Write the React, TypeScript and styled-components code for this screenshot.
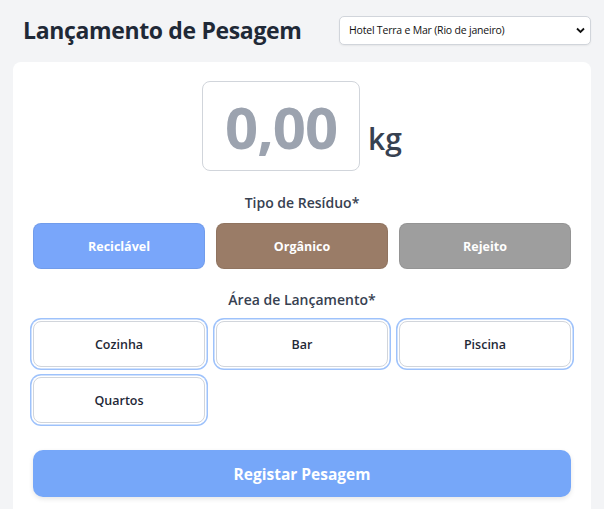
import React, { useState } from "react";
import styled, { createGlobalStyle } from "styled-components";

const Global = createGlobalStyle`
  html, body { margin: 0; padding: 0; background: #f3f4f6; }
  body { font-family: "Open Sans", "Noto Sans", sans-serif; color: #1f2937; }
  * { box-sizing: border-box; }
`;

const Page = styled.div`
  padding: 0 13px;
  min-height: 509px;
`;

const Header = styled.header`
  display: flex;
  align-items: center;
  justify-content: space-between;
  padding: 14px 0 16px 10px;
`;

const Title = styled.h1`
  margin: 0;
  font-size: 23px;
  font-weight: 700;
  color: #1f2937;
  letter-spacing: -0.35px;
`;

const SelectWrap = styled.div`
  position: relative;
  width: 252px;
  height: 29px;
`;

const Select = styled.select`
  appearance: none;
  width: 100%;
  height: 100%;
  border: 1px solid #d1d5db;
  border-radius: 5px;
  background: #fff;
  box-shadow: 0 1px 2px rgba(0, 0, 0, 0.06);
  padding: 0 24px 0 9px;
  font-family: "Open Sans", sans-serif;
  font-size: 10.5px;
  letter-spacing: -0.2px;
  color: #111;
`;

const Chevron = styled.svg`
  position: absolute;
  right: 6px;
  top: 11px;
  pointer-events: none;
`;

const Card = styled.main`
  background: #fff;
  border-radius: 8px;
  padding: 19px 20px 24px;
  display: flex;
  flex-direction: column;
  align-items: stretch;
`;

const WeightRow = styled.div`
  display: flex;
  justify-content: center;
  align-items: flex-end;
  gap: 8px;
`;

const WeightBox = styled.div`
  width: 158px;
  height: 90px;
  border: 1px solid #d1d5db;
  border-radius: 8px;
  display: flex;
  align-items: center;
  justify-content: center;
  font-size: 58px;
  font-weight: 700;
  color: #9ca3af;
  letter-spacing: -1px;
`;

const Unit = styled.span`
  font-size: 30px;
  font-weight: 600;
  color: #374151;
  line-height: 1;
  padding-bottom: 17px;
`;

const Label = styled.div<{ $top: number }>`
  margin-top: ${(p) => p.$top}px;
  text-align: center;
  font-size: 14px;
  font-weight: 600;
  color: #374151;
  line-height: 20px;
`;

const Grid = styled.div<{ $top: number }>`
  display: grid;
  grid-template-columns: repeat(3, 1fr);
  gap: 10px 11px;
  margin-top: ${(p) => p.$top}px;
`;

const TypeButton = styled.button<{ $bg: string }>`
  height: 46px;
  border: 1px solid rgba(0, 0, 0, 0.06);
  border-radius: 8px;
  background: ${(p) => p.$bg};
  color: #fff;
  font-family: "Open Sans", sans-serif;
  font-size: 12.5px;
  font-weight: 700;
  cursor: pointer;
`;

const AreaButton = styled.button`
  height: 46px;
  border: 1px solid #d1d5db;
  border-radius: 8px;
  background: #fff;
  color: #1f2937;
  font-family: "Open Sans", sans-serif;
  font-size: 12.5px;
  font-weight: 600;
  box-shadow: 0 0 0 1.5px #fff, 0 0 0 3px #9ec2fb;
  cursor: pointer;
`;

const Submit = styled.button`
  margin-top: 27px;
  height: 47px;
  border: none;
  border-radius: 10px;
  background: #76a7f9;
  color: #fff;
  font-family: "Open Sans", sans-serif;
  font-size: 15.5px;
  font-weight: 700;
  box-shadow: 0 2px 5px rgba(0, 0, 0, 0.1);
  cursor: pointer;
`;

const types = [
  { name: "Reciclável", bg: "#79a6fa" },
  { name: "Orgânico", bg: "#9a7c67" },
  { name: "Rejeito", bg: "#9e9e9e" },
];

const areas = ["Cozinha", "Bar", "Piscina", "Quartos"];

export default function App() {
  const [hotel, setHotel] = useState("1");
  return (
    <>
      <Global />
      <Page>
        <Header>
          <Title>Lançamento de Pesagem</Title>
          <SelectWrap>
            <Select value={hotel} onChange={(e) => setHotel(e.target.value)}>
              <option value="1">Hotel Terra e Mar (Rio de janeiro)</option>
            </Select>
            <Chevron width="9" height="7" viewBox="0 0 9 7">
              <path d="M1 1.5 L4.5 5 L8 1.5" fill="none" stroke="#111" strokeWidth="1.8" />
            </Chevron>
          </SelectWrap>
        </Header>
        <Card>
          <WeightRow>
            <WeightBox>0,00</WeightBox>
            <Unit>kg</Unit>
          </WeightRow>
          <Label $top={22}>Tipo de Resíduo*</Label>
          <Grid $top={10}>
            {types.map((t) => (
              <TypeButton key={t.name} $bg={t.bg}>
                {t.name}
              </TypeButton>
            ))}
          </Grid>
          <Label $top={21}>Área de Lançamento*</Label>
          <Grid $top={11}>
            {areas.map((a) => (
              <AreaButton key={a}>{a}</AreaButton>
            ))}
          </Grid>
          <Submit>Registar Pesagem</Submit>
        </Card>
      </Page>
    </>
  );
}
